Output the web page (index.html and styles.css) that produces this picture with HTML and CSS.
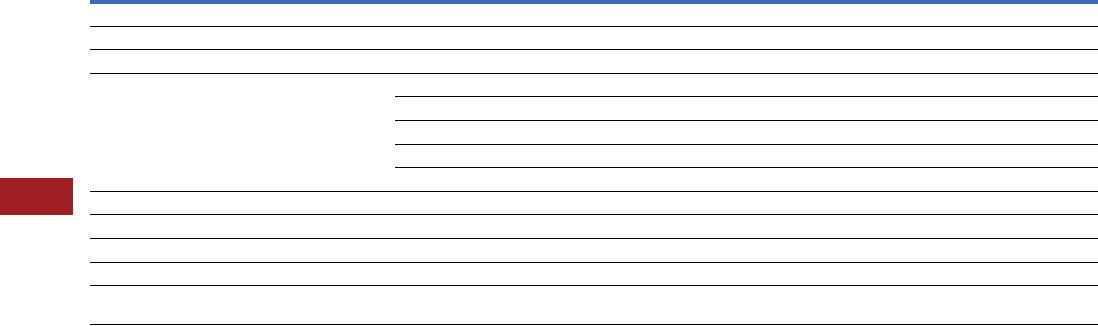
FILE: index.html
```html
<!DOCTYPE html>
<html lang="en">
<head>
<meta charset="utf-8">
<title>Table</title>
<link rel="stylesheet" href="styles.css">
</head>
<body>
<div class="page">
  <aside class="side">
    <div class="tab"></div>
  </aside>
  <main class="sheet">
    <div class="grid">
      <div class="cell full"></div>
      <div class="cell full"></div>
      <div class="cell full"></div>
      <div class="cell merged"></div>
      <div class="cell sub r4"></div>
      <div class="cell sub r5"></div>
      <div class="cell sub r6"></div>
      <div class="cell sub r7"></div>
      <div class="cell sub r8"></div>
      <div class="cell full"></div>
      <div class="cell full"></div>
      <div class="cell full"></div>
      <div class="cell full"></div>
      <div class="cell full"></div>
    </div>
  </main>
</div>
</body>
</html>
```

FILE: styles.css
```css
html, body {
  margin: 0;
  padding: 0;
  background: #ffffff;
  font-family: "Liberation Sans", Arial, sans-serif;
}

.page {
  display: flex;
  width: 1098px;
  height: 326px;
  overflow: hidden;
}

.side {
  width: 90px;
  flex: 0 0 90px;
  padding-top: 178px;
  box-sizing: border-box;
}

.tab {
  width: 73px;
  height: 37px;
  background: #a11f24;
}

.sheet {
  flex: 1 1 auto;
  border-top: 4px solid #3d6cb4;
}

.grid {
  display: grid;
  grid-template-columns: 305px 1fr;
  grid-template-rows: 23px 23px 24px 23px 24px 24px 23px 24px 23px 24px 24px 23px 39px;
}

.cell {
  box-sizing: border-box;
  border-bottom: 1px solid #000000;
}

.full {
  grid-column: 1 / span 2;
}

.merged {
  grid-column: 1;
  grid-row: 4 / span 5;
}

.sub {
  grid-column: 2;
}

.r4 { grid-row: 4; }
.r5 { grid-row: 5; }
.r6 { grid-row: 6; }
.r7 { grid-row: 7; }
.r8 { grid-row: 8; }
```
